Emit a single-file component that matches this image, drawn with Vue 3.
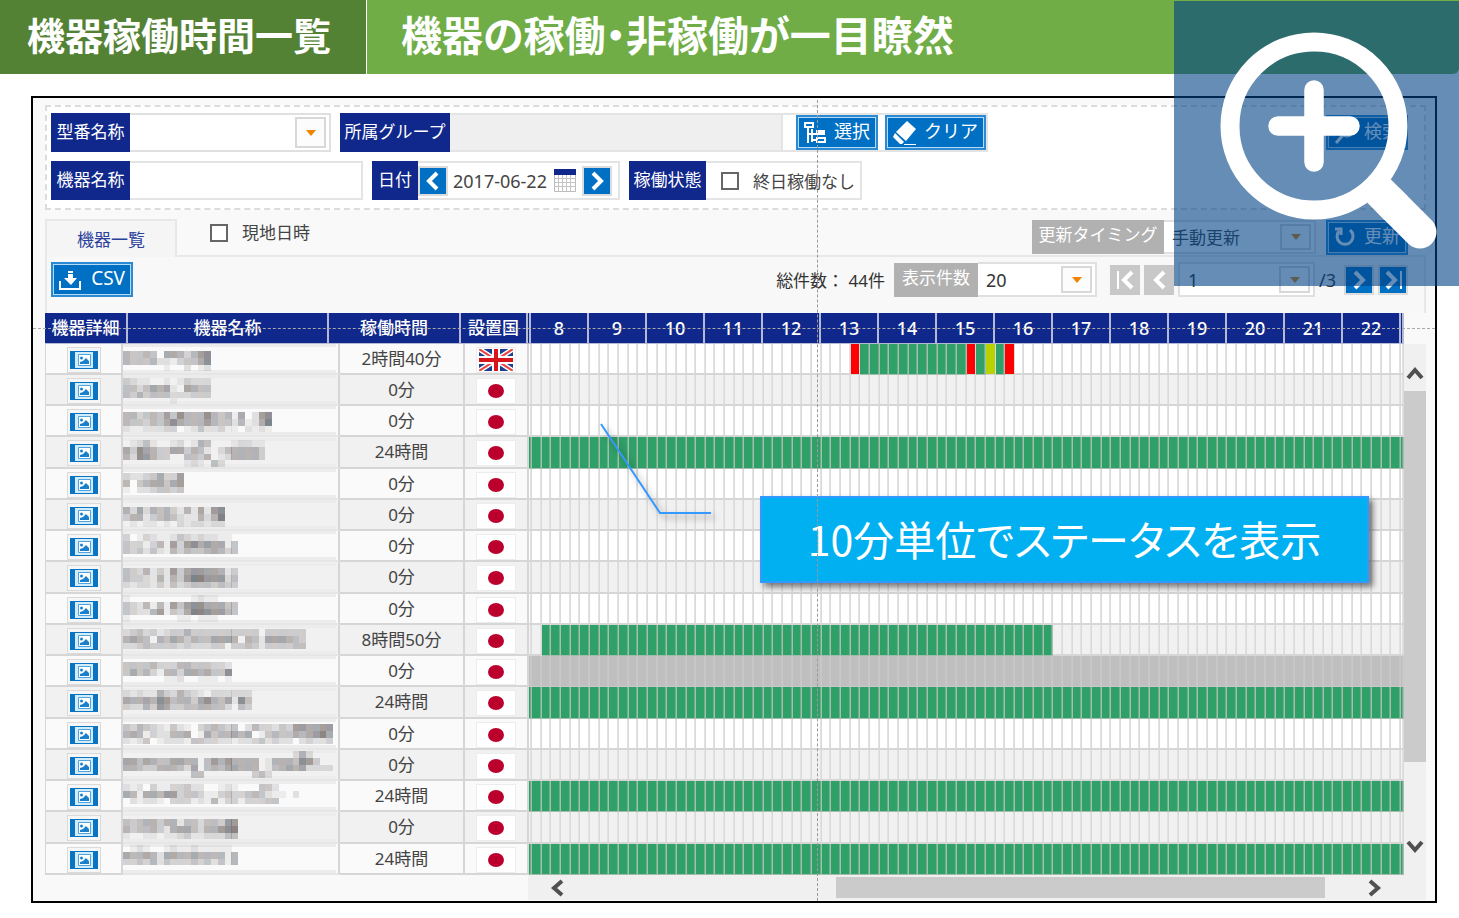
<script setup>
import { ref } from 'vue'

const model = ref('')
const group = ref('')
const machine = ref('')
const date = ref('2017-06-22')
const allDayIdle = ref(false)
const localTime = ref(false)

const hours = Array.from({ length: 15 }, (_, i) => i + 8)
const SLOTS = hours.length * 6

// Each slot is ten minutes: g running, r alarm, y waiting, x no data
const build = (ranges) => {
  const out = Array(SLOTS).fill('')
  for (const [from, to, state] of ranges) {
    for (let i = from; i <= to; i++) out[i] = state
  }
  return out
}

const full = [[0, 89, 'g']]

// Masked names: every line is a strip of tiles, each digit its darkness
const rows = [
  { time: '2時間40分', country: 'gb', lead: '', ranges: [[33, 33, 'r'], [34, 44, 'g'], [45, 45, 'r'], [46, 46, 'g'], [47, 47, 'y'], [48, 48, 'g'], [49, 49, 'r']], top: 7, mask: ['5445406653578', '5444522134468', '0000001002012'] },
  { time: '0分', country: 'jp', lead: '', ranges: [], top: 3, mask: ['3211001013222', '4424656106544', '4353444222333', '0000000100000'] },
  { time: '0分', country: 'jp', lead: '', ranges: [], top: 6, mask: ['5534547485558545160278', '5443546865557544251269', '2112223301242231102121'] },
  { time: '24時間', country: 'jp', lead: 'g', ranges: full, top: 2, mask: ['012410012015400012211', '638653366354102455553', '528753300443501255553', '000000000121042000000'] },
  { time: '0分', country: 'jp', lead: '', ranges: [], top: 4, mask: ['322346337', '504566467', '102234434'] },
  { time: '0分', country: 'jp', lead: '', ranges: [], top: 7, mask: ['526254531516178', '355134542115259', '010110102122122'] },
  { time: '0分', country: 'jp', lead: '', ranges: [], top: 3, mask: ['30132112432322110', '43313517378676614', '43424215354456534'] },
  { time: '0分', country: 'jp', lead: '', ranges: [], top: 5, mask: ['43251317367766513', '43321515379977724', '21221314234443433'] },
  { time: '0分', country: 'jp', lead: '', ranges: [], top: 1, mask: ['10000000001211000', '43251517478866644', '43225714369987754', '10000000110111000'] },
  { time: '8時間50分', country: 'jp', lead: '', ranges: [[1, 53, 'g']], top: 4, mask: ['234231233533333333330333333', '565405465354466650541666543', '223433332322233033431333344'] },
  { time: '0分', country: 'jp', lead: 'x', ranges: [[0, 89, 'x']], top: 6, mask: ['4444533355444332', '4645315536656448', '0000001120011101'] },
  { time: '24時間', country: 'jp', lead: 'g', ranges: full, top: 2, mask: ['2121153253210222222', '6556587455368546184', '3225376334455442043'] },
  { time: '0分', country: 'jp', lead: '', ranges: [], top: 5, mask: ['4354321421034543402533243776677', '5651322556016455656014544656796', '2124012221443322122342322023223'] },
  { time: '0分', country: 'jp', lead: '', ranges: [], top: 1, mask: ['0000000000000000000000000252000', '6646544665504757555501555487300', '5543355542604546655501456562222', '0000000000440000000342000000000'] },
  { time: '24時間', country: 'jp', lead: 'g', ranges: full, top: 3, mask: ['21203113342200121000442', '65166577344311343345421102', '02122103331215133133344'] },
  { time: '0分', country: 'jp', lead: '', ranges: [], top: 6, mask: ['43455355144244377', '53445315664255789', '10011011231122244'] },
  { time: '24時間', country: 'jp', lead: 'g', ranges: full, top: 1, mask: ['01210012112111110', '65565266556555515', '33435243334342415'] },
].map((row) => ({
  ...row,
  slots: build(row.ranges),
  tiles: row.mask.flatMap((line, y) =>
    [...line].map((d, x) => ({ x: x * 6.78, y: row.top + y * 6.78, level: Number(d), tint: (x * 5 + y * 2 + row.top) % 4 })).filter((t) => t.level > 0)
  ),
}))
</script>

<template>
  <div class="page">
    <header class="banner">
      <h1>機器稼働時間一覧</h1>
      <p>機器の稼働・非稼働が一目瞭然</p>
    </header>

    <main class="frame">
      <form class="filters" @submit.prevent>
        <div class="line">
          <div class="field">
            <label for="model">型番名称</label>
            <span class="pick model"><select id="model" v-model="model"><option value=""></option></select><i></i></span>
          </div>
          <div class="field">
            <label for="group" class="tight">所属グループ</label>
            <input id="group" v-model="group" class="box group" type="text" readonly />
            <span class="actions">
              <button type="button" class="btn">
                <svg width="24" height="24" viewBox="0 0 24 24" fill="none" stroke="currentColor" stroke-width="2"><path d="M2 2h8v4H2zM5 6v16M9 8v13M5 13h8M9 19h5M14 17h8v4h-8z" /><path d="M13 9h9v5h-9z" fill="currentColor" stroke="none" /></svg>
                選択
              </button>
              <button type="button" class="btn wide">
                <svg width="26" height="26" viewBox="0 0 26 26" fill="currentColor"><path d="M15 1l9 8-10 12L4 12z" /><path d="M3 13l9 9-2 2H8l-7-7z" /><path d="M12 24h12v1H12z" /></svg>
                クリア
              </button>
            </span>
          </div>
          <button type="submit" class="btn end">
            <svg width="24" height="24" viewBox="0 0 24 24" fill="none" stroke="currentColor" stroke-width="3"><circle cx="14" cy="9" r="6" /><path d="M10 14l-7 8" /></svg>
            検索
          </button>
        </div>
        <div class="line">
          <div class="field">
            <label for="machine">機器名称</label>
            <input id="machine" v-model="machine" class="box machine" type="text" />
          </div>
          <div class="field">
            <label for="date" class="short">日付</label>
            <span class="box datebox">
              <button type="button" class="step" aria-label="前日"><svg width="26" height="26" viewBox="0 0 26 26"><path d="M17 5l-8 8 8 8" /></svg></button>
              <input id="date" v-model="date" type="text" />
              <svg class="cal" width="22" height="23" viewBox="0 0 22 23"><path fill="#fff" stroke="#bbb" d="M.5.500h21v22H.5z" /><path stroke="#c4c4c4" d="M4.500 5v18M8.500 5v18M12.500 5v18M16.500 5v18M0 9.500h22M0 13.500h22M0 17.500h22" /><path fill="#10288c" d="M0 0h22v6H0z" /></svg>
              <button type="button" class="step" aria-label="翌日"><svg width="26" height="26" viewBox="0 0 26 26"><path d="M9 5l8 8-8 8" /></svg></button>
            </span>
          </div>
          <div class="field">
            <span class="tag">稼働状態</span>
            <span class="box checkbox">
              <input id="idle" v-model="allDayIdle" type="checkbox" />
              <label for="idle">終日稼働なし</label>
            </span>
          </div>
        </div>
      </form>

      <div class="tabs">
        <button type="button" class="tab">機器一覧</button>
        <div class="tabside">
          <input id="local" v-model="localTime" type="checkbox" />
          <label for="local">現地日時</label>
          <div class="refresh">
            <label for="timing" class="gray timing">更新タイミング</label>
            <span class="pick timingbox"><select id="timing"><option>手動更新</option></select><i></i></span>
            <button type="button" class="btn">
              <svg width="24" height="24" viewBox="0 0 24 24" fill="none" stroke="currentColor" stroke-width="3"><path d="M17 5a8 8 0 1 1-11 1" /><path d="M2 4h6v6" /></svg>
              更新
            </button>
          </div>
        </div>
      </div>

      <div class="toolbar">
        <button type="button" class="btn csv">
          <svg width="24" height="22" viewBox="0 0 24 22"><path fill="none" stroke="currentColor" stroke-width="2" d="M2 12v8h20v-8" /><path fill="currentColor" d="M10 2h5v2h-5zM10 5h5v4h4l-6 7-7-7h4z" /></svg>
          CSV
        </button>
        <span class="total">総件数： 44件</span>
        <label for="size" class="gray sizelabel">表示件数</label>
        <span class="pick size"><select id="size"><option>20</option></select><i></i></span>
        <div class="pager">
          <button type="button" class="nav off" aria-label="最初"><svg width="26" height="26" viewBox="0 0 26 26"><path d="M6 4v18" class="thin" /><path d="M20 5l-8 8 8 8" /></svg></button>
          <button type="button" class="nav off" aria-label="前へ"><svg width="26" height="26" viewBox="0 0 26 26"><path d="M18 5l-8 8 8 8" /></svg></button>
          <span class="pick pageno"><select aria-label="ページ"><option>1</option></select><i></i></span>
          <span class="pages">/3</span>
          <button type="button" class="step" aria-label="次へ"><svg width="26" height="26" viewBox="0 0 26 26"><path d="M9 5l8 8-8 8" /></svg></button>
          <button type="button" class="step" aria-label="最後"><svg width="26" height="26" viewBox="0 0 26 26"><path d="M7 5l8 8-8 8" /><path d="M21 4v18" class="thin" /></svg></button>
        </div>
      </div>

      <div class="grid">
        <table class="head">
          <colgroup><col class="h1" /><col class="h2" /><col class="h3" /><col class="h4" /><col class="edge" /><col v-for="h in hours" :key="h" /><col class="edge" /></colgroup>
          <thead>
            <tr>
              <th>機器詳細</th><th>機器名称</th><th>稼働時間</th><th>設置国</th><th class="sliver"></th>
              <th v-for="h in hours" :key="h" class="hour">{{ h }}</th><th class="sliver"></th>
            </tr>
          </thead>
        </table>
        <table class="body">
          <colgroup><col class="b1" /><col class="b2" /><col class="b3" /><col class="b4" /><col /></colgroup>
          <tbody>
            <tr v-for="(row, r) in rows" :key="r">
              <td>
                <button type="button" class="detail" aria-label="機器詳細">
                  <svg width="28" height="18" viewBox="0 0 28 18"><path fill="#0a74c4" d="M0 0h28v18H0z" /><path fill="#d3ecfb" d="M5 1h18v16H5z" /><path fill="#fff" stroke="#4fa3dc" d="M8.500 3.500h12v11h-12z" /><circle cx="11.500" cy="7" r="1.500" fill="#1a80cc" /><path fill="#1a80cc" d="M10 13v-2l3-1 3-3 3 3v3z" /></svg>
                </button>
              </td>
              <td class="name">
                <svg class="mosaic" width="216" height="29" viewBox="0 0 216 29" shape-rendering="crispEdges">
                  <path class="band" d="M0 0h213v3H0zM0 26h213v3H0z" />
                  <rect v-for="(t, i) in row.tiles" :key="i" :x="t.x" :y="t.y" width="6.8" height="6.8" :class="['t' + t.tint]" :fill-opacity="t.level * 0.1" />
                </svg>
              </td>
              <td class="time">{{ row.time }}</td>
              <td>
                <span class="flag">
                  <svg v-if="row.country === 'gb'" width="34" height="22" viewBox="0 0 34 22"><path fill="#1c3f94" d="M0 0h34v22H0z" /><path stroke="#fff" stroke-width="5" d="M0 0l34 22M34 0L0 22" /><path stroke="#e8443a" stroke-width="2" d="M0 0l34 22M34 0L0 22" /><path stroke="#fff" stroke-width="8" d="M17 0v22M0 11h34" /><path stroke="#d8141c" stroke-width="4" d="M17 0v22M0 11h34" /></svg>
                  <svg v-else width="34" height="22" viewBox="0 0 34 22"><ellipse cx="17" cy="11" rx="8" ry="7" fill="#bc002d" /></svg>
                </span>
              </td>
              <td class="chart">
                <div class="slots">
                  <span class="slot lead" :class="row.lead"></span>
                  <span v-for="(s, i) in row.slots" :key="i" class="slot" :class="s"></span>
                  <span class="slot lead" :class="row.lead"></span>
                </div>
              </td>
            </tr>
          </tbody>
        </table>
        <div class="vbar">
          <button type="button" class="arrow up" aria-label="上へ"><svg width="18" height="16" viewBox="0 0 18 16"><path d="M2 12l7-8 7 8" /></svg></button>
          <span class="thumb"></span><span class="rest"></span>
          <button type="button" class="arrow down" aria-label="下へ"><svg width="18" height="16" viewBox="0 0 18 16"><path d="M2 4l7 8 7-8" /></svg></button>
        </div>
        <div class="hbar">
          <button type="button" class="arrow left" aria-label="左へ"><svg width="16" height="18" viewBox="0 0 16 18"><path d="M12 2L4 9l8 7" /></svg></button>
          <span class="before"></span><span class="thumb"></span><span class="after"></span>
          <button type="button" class="arrow right" aria-label="右へ"><svg width="16" height="18" viewBox="0 0 16 18"><path d="M4 2l8 7-8 7" /></svg></button>
        </div>
      </div>

      <svg class="leader" width="130" height="110" viewBox="0 0 130 110"><path d="M8 8l59 89h51" /></svg>
      <div class="callout">10分単位でステータスを表示</div>
      <span class="guide vertical"></span>
      <span class="guide horizontal"></span>
    </main>

    <button type="button" class="lens" aria-label="拡大">
      <svg width="285" height="285" viewBox="0 0 285 285" fill="none" stroke="#fff" stroke-linecap="round">
        <circle cx="140" cy="125" r="84" stroke-width="19" />
        <path stroke-width="19.500" d="M104 125h72M140 89v72" />
        <path stroke-width="33" stroke-linecap="butt" d="M200 185l22 22" />
        <path stroke-width="33" d="M216 201l30 30" />
      </svg>
    </button>
  </div>
</template>

<style>
body {
  background: #fff;
}
</style>

<style scoped>
* {
  box-sizing: border-box;
}
.page {
  position: relative;
  font-family: "Noto Sans", "Noto Sans CJK JP", sans-serif;
  font-size: 17px;
  color: #444;
}
button,
input,
select {
  font: inherit;
  color: inherit;
  margin: 0;
  padding: 0;
  border: 0;
  border-radius: 0;
  background: none;
  appearance: none;
}
svg {
  display: block;
  flex: none;
}
.banner {
  display: flex;
  height: 74px;
  border-bottom-right-radius: 6px;
  overflow: hidden;
  background: #70ad47;
  color: #fff;
  font-weight: 700;
  white-space: nowrap;
}
.banner h1,
.banner p {
  margin: 0;
  font-family: "Noto Sans CJK JP", sans-serif;
  line-height: 67px;
}
.banner h1 {
  width: 367px;
  padding-left: 27px;
  border-right: 1px solid #fff;
  background: #548235;
  font-size: 38px;
}
.banner p {
  padding-left: 34px;
  font-size: 41px;
  font-feature-settings: "palt";
}
.frame {
  position: relative;
  margin: 22px 22px 0 31px;
  padding: 7px 9px 1px 12px;
  border: 2px solid #000;
  background: #f9f9f9;
}

.filters {
  display: flex;
  flex-direction: column;
  gap: 9px;
  padding: 6px 16px 8px 4px;
  border: 2px dashed #dcdcdc;
  background: #fff;
}
.line,
.field {
  display: flex;
  align-items: center;
}
.line {
  gap: 9px;
}
.field > label,
.tag {
  width: 79px;
  height: 39px;
  background: #10288c;
  color: #fff;
  line-height: 37px;
  text-align: center;
  white-space: nowrap;
}
.field > label.tight {
  width: 110px;
}
.field > label.short {
  width: 46px;
}
.field > .tag {
  width: 77px;
}
.box {
  height: 39px;
  border: 2px solid #e4e4e4;
  border-left: 0;
  background: #fff;
}
.group {
  width: 333px;
  background: #efefef;
}
.machine {
  width: 233px;
}
.datebox {
  display: flex;
  align-items: center;
  width: 202px;
}
.datebox input {
  width: 106px;
  padding-left: 5px;
  font-size: 18px;
}
.cal {
  margin-right: 6px;
}
.checkbox {
  display: flex;
  align-items: center;
  gap: 14px;
  width: 156px;
  padding-left: 15px;
}
input[type="checkbox"] {
  width: 18px;
  height: 18px;
  border: 2px solid #666;
  background: #fff;
}
.actions {
  display: flex;
  align-items: center;
  gap: 7px;
  height: 39px;
  padding: 0 0 0 13px;
  border: 2px solid #e4e4e4;
  border-left: 0;
}
.btn {
  display: flex;
  align-items: center;
  justify-content: space-between;
  width: 82px;
  height: 35px;
  padding: 0 8px 3px 7px;
  background: #0070c4;
  box-shadow: inset 0 0 0 2px #2a8ad2, inset 0 0 0 3px #b4daf5;
  color: #fff;
  font-size: 18px;
  line-height: 28px;
  white-space: nowrap;
}
.btn svg {
  margin-top: 3px;
}
.btn.wide {
  width: 101px;
}
.btn.end {
  margin-left: auto;
}
.pick {
  position: relative;
  display: flex;
  border: 2px solid #e0e0e0;
  border-left: 0;
  background: #fff;
}
.pick select {
  width: 100%;
  padding-left: 8px;
}
.pick i {
  position: absolute;
  top: 2px;
  right: 3px;
  bottom: 2px;
  width: 31px;
  border: 2px solid #d8d8d8;
  background: #fcfcfc;
  pointer-events: none;
}
.pick i::after {
  content: "";
  position: absolute;
  top: 50%;
  left: 50%;
  margin: -3px 0 0 -5px;
  border: 5px solid transparent;
  border-top: 6px solid #f08300;
  border-bottom: 0;
}
.model {
  width: 201px;
  height: 39px;
}
.step,
.nav {
  display: flex;
  align-items: center;
  justify-content: center;
  width: 30px;
  height: 30px;
  border: 2px solid #dcdcdc;
  background: #0070c4;
}
.nav {
  background: #c8c8c8;
  border-color: #c8c8c8;
}
.step path,
.nav path {
  fill: none;
  stroke: #fff;
  stroke-width: 4;
}
.step .thin,
.nav .thin {
  stroke-width: 2;
}

.tabs {
  display: flex;
  height: 38px;
  margin-top: 9px;
}
.tab {
  width: 132px;
  padding-bottom: 2px;
  border: 2px solid #e8e8e8;
  border-bottom: 0;
  background: #f5f5f5;
  color: #2c3f9c;
}
.tabside {
  display: flex;
  align-items: center;
  flex: 1;
  padding: 0 18px 8px 33px;
  border-bottom: 2px solid #e8e8e8;
}
.tabside > label {
  padding: 0 0 4px 14px;
}
.refresh {
  display: flex;
  align-items: center;
  height: 34px;
  margin: 8px 0 0 auto;
}
.gray {
  height: 34px;
  background: #b1b1b1;
  color: #fff;
  line-height: 30px;
  text-align: center;
  white-space: nowrap;
}
.timing {
  width: 132px;
}
.timingbox {
  width: 152px;
  height: 34px;
  margin-right: 10px;
}
.toolbar {
  display: flex;
  align-items: center;
  height: 56px;
  padding: 0 16px 11px 4px;
  border: 2px solid #e8e8e8;
  border-width: 0 2px;
  background: #f8f8f8;
  color: #333;
}
.btn.csv {
  font-size: 19px;
}
.total {
  margin-left: auto;
  padding-right: 9px;
}
.sizelabel {
  width: 84px;
}
.size {
  width: 119px;
  height: 35px;
}
.size select,
.pageno select {
  font-size: 18px;
}
.pager {
  display: flex;
  align-items: center;
  gap: 4px;
  margin-left: 13px;
}
.pageno {
  width: 137px;
  height: 35px;
  border-left: 2px solid #e0e0e0;
}
.pages {
  width: 21px;
  font-size: 18px;
}

.grid {
  display: grid;
  grid-template-columns: 1fr 22px;
}
table {
  width: 100%;
  border-spacing: 0;
  table-layout: fixed;
}
th,
td {
  padding: 0;
}
.head {
  grid-column: 1;
}
.h1 { width: 83px; }
.h2 { width: 201px; }
.h3 { width: 132px; }
.h4 { width: 67px; }
.edge { width: 3px; }
.b1 { width: 77px; }
.b2 { width: 217px; }
.b3 { width: 125px; }
.b4 { width: 64px; }
th {
  height: 31px;
  border-right: 2px solid #b4b9d6;
  border-bottom: 1px solid #b4b9d6;
  background: #10288c;
  color: #fff;
  font-weight: 500;
  line-height: 28px;
  white-space: nowrap;
}
th.hour {
  font-size: 18px;
}
.body {
  grid-column: 1;
  border-left: 1px solid #d6d6d6;
}
.body tr {
  height: 31px;
  background: #fafafa;
}
.body tr:nth-child(4n) {
  height: 32px;
}
.body tr:nth-child(even) {
  background: #f1f1f1;
}
td {
  border-right: 2px solid #d6d6d6;
  border-bottom: 2px solid #d6d6d6;
  text-align: center;
  line-height: 26px;
  white-space: nowrap;
}
td.name {
  overflow: hidden;
  border-bottom-color: #e6e6e6;
}
.detail {
  display: block;
  margin: 2px auto 0;
  padding: 3px 2px;
  border: 1px solid #dadada;
  background: #f6f6f6;
}
.band { fill: #ececec; }
.t0 { fill: #7f7876; }
.t1 { fill: #6f7880; }
.t2 { fill: #80766f; }
.t3 { fill: #74747c; }
.flag {
  display: block;
  width: 38px;
  margin: 2px auto 0;
  padding: 1px 2px;
  background: #fff;
  box-shadow: 0 0 0 1px #ececec;
}
td.chart {
  border: 0;
  background: #fff;
}
tr:nth-child(even) td.chart {
  background: #f1f1f1;
}
.slots {
  display: flex;
  height: 31px;
}
tr:nth-child(4n) .slots {
  height: 32px;
}
.slot {
  flex: 1;
  border-right: 1px solid #dadada;
  border-bottom: 2px solid #d6d6d6;
  box-shadow: inset -1px 0 0 #e2e2e2;
}
.slot.lead {
  flex: none;
  width: 3px;
}
.slot.g {
  border-right-color: #a9bcb0;
  border-bottom: 1px solid #a3bdad;
  background: #2fa067;
  box-shadow: inset -1px 0 0 #6bb08c;
}
.slot.r,
.slot.y {
  border-bottom-width: 1px;
  box-shadow: none;
}
.slot.r {
  background: #ff0000;
}
.slot.y {
  background: #b8d200;
}
.slot.x {
  border-right-color: #c8c8c8;
  border-bottom: 1px solid #c8c8c8;
  background: #bfbfbf;
  box-shadow: inset -1px 0 0 #c6c6c6;
}
.vbar {
  display: flex;
  flex-direction: column;
  background: #f0f0f0;
}
.hbar {
  display: flex;
  grid-column: 1 / -1;
  height: 25px;
  margin-left: 483px;
  padding: 2px 26px 2px 0;
  background: #f0f0f0;
}
.arrow {
  display: flex;
  align-items: center;
  justify-content: center;
}
.arrow path {
  fill: none;
  stroke: #505050;
  stroke-width: 4;
}
.arrow.up {
  height: 47px;
  padding-top: 12px;
}
.arrow.down {
  height: 59px;
}
.arrow.left {
  width: 60px;
}
.arrow.right {
  width: 52px;
}
.thumb {
  background: #cbcbcb;
}
.vbar .thumb { flex: 371; }
.vbar .rest { flex: 54; }
.hbar .before { flex: 248; }
.hbar .thumb { flex: 489; }
.hbar .after { flex: 23; }

.leader {
  position: absolute;
  top: 318px;
  left: 560px;
  fill: none;
  stroke: #3399ff;
  stroke-width: 2;
  filter: drop-shadow(4px 4px 3px rgba(0, 0, 0, 0.35));
}
.callout {
  position: absolute;
  top: 398px;
  left: 727px;
  width: 609px;
  height: 87px;
  border: 2px solid #3399ff;
  background: #00b0f0;
  box-shadow: 4px 4px 6px rgba(0, 0, 0, 0.5);
  color: #fff;
  font-family: "Noto Sans CJK JP", sans-serif;
  font-size: 41px;
  font-feature-settings: "palt";
  line-height: 80px;
  text-align: center;
  white-space: nowrap;
}
.guide {
  position: absolute;
}
.guide.vertical {
  top: 2px;
  bottom: 0;
  left: 784px;
  border-left: 1px dashed #9a9a9a;
}
.guide.horizontal {
  top: 230px;
  right: 0;
  left: 0;
  border-top: 1px dashed #a8a8a8;
}
.lens {
  position: absolute;
  top: 1px;
  right: 0;
  background: rgba(0, 65, 133, 0.6);
}
</style>
